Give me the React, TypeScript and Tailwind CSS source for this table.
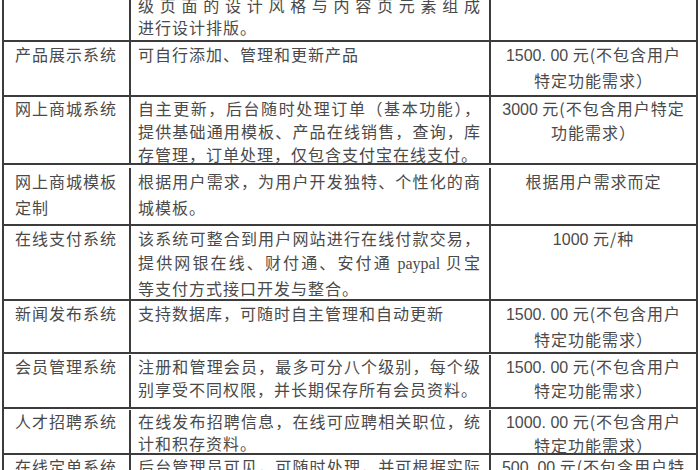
import React from "react";

type Line = { t: React.ReactNode; j?: boolean };
type Row = {
  h: number;
  pt: number;
  lh: number;
  c1: string[];
  c2: Line[];
  c3: React.ReactNode[];
};

const Lat = ({ children }: { children: React.ReactNode }) => (
  <span className="font-['Liberation_Sans',sans-serif] tracking-normal">{children}</span>
);
const Ser = ({ children }: { children: React.ReactNode }) => (
  <span className="font-['Liberation_Serif',serif] tracking-normal">{children}</span>
);

const rows: Row[] = [
  {
    h: 49,
    pt: 1,
    lh: 22,
    c1: [],
    c2: [{ t: "级页面的设计风格与内容页元素组成", j: true }, { t: "进行设计排版。" }],
    c3: [],
  },
  {
    h: 55,
    pt: 0,
    lh: 24,
    c1: ["产品展示系统"],
    c2: [{ t: "可自行添加、管理和更新产品" }],
    c3: [
      <>
        <Lat>1500. 00 </Lat>元(不包含用户
      </>,
      "特定功能需求）",
    ],
  },
  {
    h: 68,
    pt: 0,
    lh: 23,
    c1: ["网上商城系统"],
    c2: [
      { t: "自主更新，后台随时处理订单（基本功能），", j: true },
      { t: "提供基础通用模板、产品在线销售，查询，库", j: true },
      { t: "存管理，订单处理，仅包含支付宝在线支付。" },
    ],
    c3: [
      <>
        <Lat>3000 </Lat>元(不包含用户特定
      </>,
      "功能需求）",
    ],
  },
  {
    h: 61,
    pt: 3,
    lh: 26,
    c1: ["网上商城模板", "定制"],
    c2: [{ t: "根据用户需求，为用户开发独特、个性化的商", j: true }, { t: "城模板。" }],
    c3: ["根据用户需求而定"],
  },
  {
    h: 75,
    pt: 0,
    lh: 24,
    c1: ["在线支付系统"],
    c2: [
      { t: "该系统可整合到用户网站进行在线付款交易，", j: true },
      {
        t: (
          <>
            提供网银在线、财付通、安付通 <Ser>paypal</Ser> 贝宝
          </>
        ),
        j: true,
      },
      { t: "等支付方式接口开发与整合。" },
    ],
    c3: [
      <>
        <Lat>1000 </Lat>元/种
      </>,
    ],
  },
  {
    h: 53,
    pt: 0,
    lh: 24,
    c1: ["新闻发布系统"],
    c2: [{ t: "支持数据库，可随时自主管理和自动更新" }],
    c3: [
      <>
        <Lat>1500. 00 </Lat>元(不包含用户
      </>,
      "特定功能需求）",
    ],
  },
  {
    h: 55,
    pt: 1,
    lh: 23,
    c1: ["会员管理系统"],
    c2: [
      { t: "注册和管理会员，最多可分八个级别，每个级", j: true },
      { t: "别享受不同权限，并长期保存所有会员资料。" },
    ],
    c3: [
      <>
        <Lat>1500. 00 </Lat>元(不包含用户
      </>,
      "特定功能需求）",
    ],
  },
  {
    h: 46,
    pt: 1,
    lh: 22,
    c1: ["人才招聘系统"],
    c2: [{ t: "在线发布招聘信息，在线可应聘相关职位，统", j: true }, { t: "计和积存资料。" }],
    c3: [
      <>
        <Lat>1000. 00 </Lat>元(不包含用户
      </>,
      "特定功能需求）",
    ],
  },
  {
    h: 60,
    pt: 0,
    lh: 22,
    c1: ["在线定单系统"],
    c2: [{ t: "后台管理员可见，可随时处理，并可根据实际", j: true }, { t: "情况进行修改。" }],
    c3: [
      <>
        <Lat>500. 00 </Lat>元(不包含用户特
      </>,
      "定功能需求）",
    ],
  },
];

export default function App() {
  return (
    <div className="h-[470px] w-[700px] overflow-hidden bg-white font-['Noto_Sans_CJK_SC',sans-serif] text-[16px] tracking-[1px] text-[#4a4a4a]">
      <div className="ml-[2px] mt-[-7px] w-[696px] border-l-2 border-r-2 border-[#3c3c3c]">
        {rows.map((r, i) => (
          <div
            key={i}
            className="flex border-b-2 border-[#3c3c3c]"
            style={{ height: r.h, paddingTop: r.pt, lineHeight: `${r.lh}px` }}
          >
            <div className="w-[127px] shrink-0 border-r-2 border-[#3c3c3c] pl-[11px]">
              {r.c1.map((t, k) => (
                <div key={k} className="whitespace-nowrap">
                  {t}
                </div>
              ))}
            </div>
            <div className="w-[360px] shrink-0 border-r-2 border-[#3c3c3c] pl-[7px] pr-[8px]">
              {r.c2.map((l, k) => (
                <div
                  key={k}
                  className={
                    l.j
                      ? "whitespace-nowrap text-justify [text-align-last:justify]"
                      : "whitespace-nowrap"
                  }
                >
                  {l.t}
                </div>
              ))}
            </div>
            <div className="flex-1 text-center">
              {r.c3.map((t, k) => (
                <div key={k} className="whitespace-nowrap">
                  {t}
                </div>
              ))}
            </div>
          </div>
        ))}
      </div>
    </div>
  );
}
